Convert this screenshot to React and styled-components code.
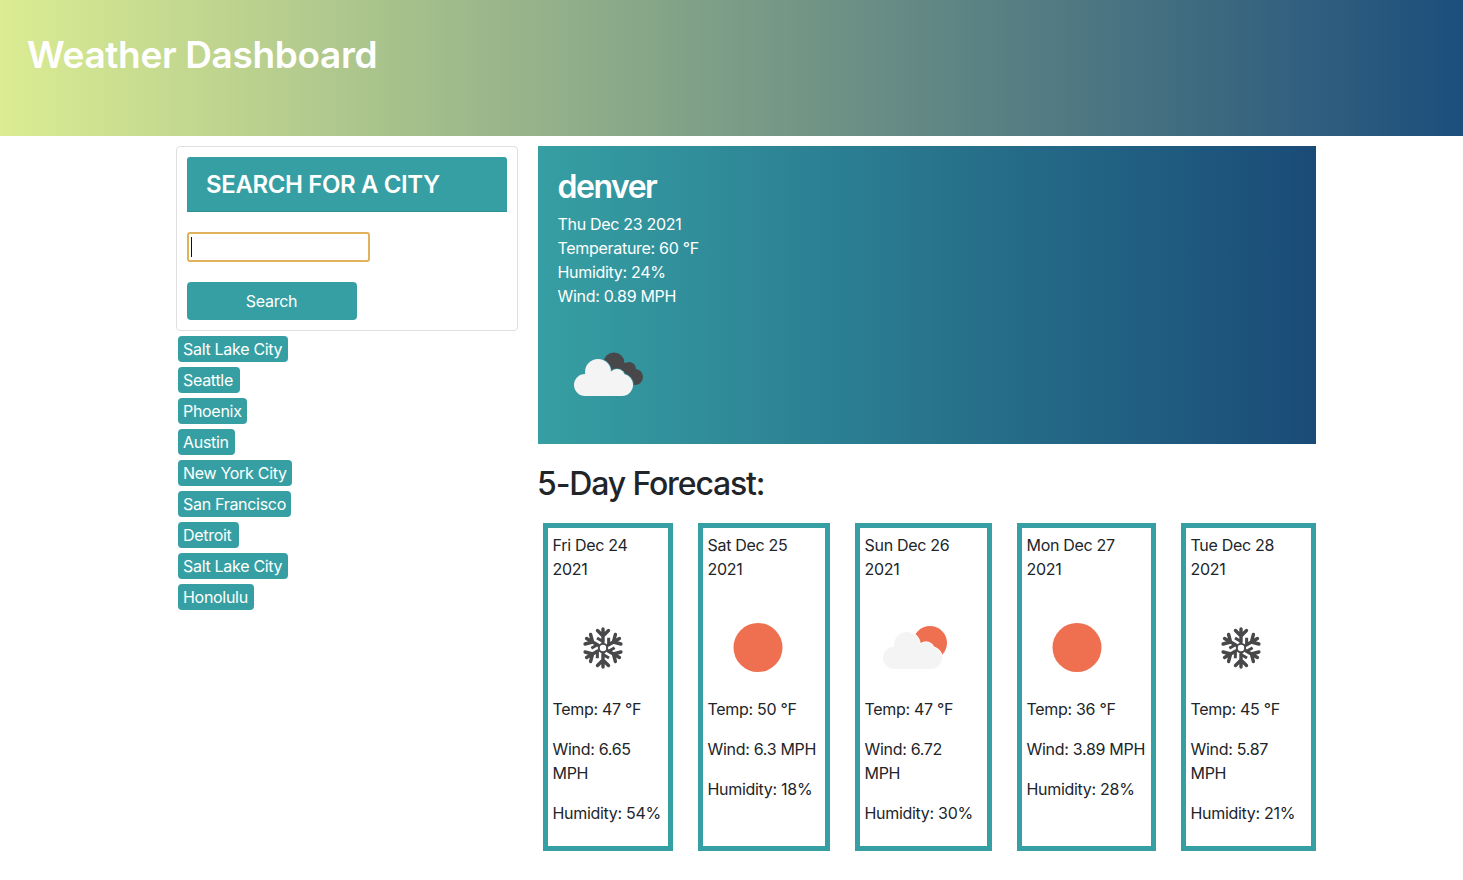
import React from 'react'
import styled, { createGlobalStyle } from 'styled-components'

const GlobalStyle = createGlobalStyle`
  html, body {
    margin: 0;
    background: #fff;
  }
  body {
    font-family: 'Inter', 'Liberation Sans', sans-serif;
    font-size: 16px;
    line-height: 24px;
    letter-spacing: -0.3px;
    color: #212529;
  }
  * {
    box-sizing: border-box;
  }
`

const Header = styled.header`
  height: 136px;
  padding: 29px 27px 0;
  background: linear-gradient(90deg, #dbec92 0%, #1c4e7c 100%);
`

const Title = styled.h1`
  margin: 0;
  color: #fff;
  font-size: 37px;
  font-weight: 600;
  line-height: 52px;
  letter-spacing: -0.35px;
`

const Page = styled.main`
  display: grid;
  grid-template-columns: 342px 778px;
  column-gap: 20px;
  padding: 10px 0 0 176px;
`

const Sidebar = styled.aside`
  display: flex;
  flex-direction: column;
  align-items: flex-start;
`

const SearchCard = styled.form`
  width: 100%;
  height: 185px;
  padding: 10px;
  margin-bottom: 5px;
  border: 1px solid #dfdfdf;
  border-radius: 4px;
`

const SearchTitle = styled.h2`
  margin: 0 0 20px;
  height: 55px;
  padding: 0 19px;
  background: #369fa3;
  border-bottom: 1px solid #2e9094;
  border-radius: 3px 3px 0 0;
  color: #fff;
  font-size: 24px;
  font-weight: 600;
  line-height: 56px;
  letter-spacing: -0.38px;
`

const InputWrap = styled.div`
  position: relative;
  width: 183px;
  height: 30px;
  margin-bottom: 20px;
`

const CityInput = styled.input`
  display: block;
  width: 100%;
  height: 100%;
  padding: 0 3px;
  border: 2px solid #e0b25c;
  border-radius: 3px;
  outline: none;
  background: #fff;
  font: inherit;
  caret-color: transparent;
`

const Caret = styled.span`
  position: absolute;
  top: 5px;
  left: 4px;
  width: 1px;
  height: 20px;
  background: #111;
`

const SearchButton = styled.button`
  display: block;
  width: 170px;
  height: 38px;
  padding: 0 1px 0 0;
  border: 0;
  border-radius: 4px;
  background: #369fa3;
  color: #fff;
  font: inherit;
  letter-spacing: inherit;
`

const CityChip = styled.button`
  display: block;
  height: 26px;
  min-width: ${props => props.$minWidth || 0}px;
  margin: 0 0 5px 2px;
  padding: 0 5px;
  border: 0;
  border-radius: 4px;
  background: #369fa3;
  color: #fff;
  font: inherit;
  letter-spacing: inherit;
  line-height: 26px;
  text-align: left;
`

const Content = styled.section`
  min-width: 0;
`

const Current = styled.div`
  height: 298px;
  padding: 21px 19.5px 0;
  background: linear-gradient(90deg, #369fa3 0%, #1a4b77 100%);
  color: #fff;
`

const CityName = styled.h2`
  margin: 0 0 5px;
  font-size: 32px;
  font-weight: 600;
  line-height: 40px;
  letter-spacing: -1.5px;
`

const CurrentLine = styled.div`
  line-height: 24px;
`

const CurrentIcon = styled.div`
  width: 100px;
  height: 100px;
  margin-top: 17px;
  margin-left: 0.5px;
`

const ForecastTitle = styled.h3`
  margin: 20px 0 19px;
  font-size: 32px;
  font-weight: 500;
  line-height: 40px;
  letter-spacing: -1.15px;
  text-indent: -1px;
`

const ForecastRow = styled.div`
  display: flex;
  justify-content: space-between;
  padding-left: 5px;
`

const DayCard = styled.article`
  width: ${props => props.$width}px;
  height: 328px;
  padding: 5px ${props => props.$padRight || 5}px 5px 4.5px;
  border: 5px solid #369fa3;
`

const DayText = styled.p`
  margin: 0 0 16px;
`

const DayIcon = styled.div`
  width: 100px;
  height: 100px;
  margin-left: 0.5px;
`

// openweather style cloud, the thing behind it is cut back so a thin gap shows
function Cloud({ back, id }) {
  const shift = back === 'sun' ? 'translate(2 1)' : undefined
  const lobes = (
    <>
      <circle cx="27" cy="60" r="11" />
      <circle cx="40" cy="47" r="13" />
      <circle cx="59" cy="52" r="8" />
      <circle cx="64" cy="60" r="11" />
      <rect x="27" y="50" width="37" height="21" />
    </>
  )
  return (
    <svg width="100" height="100" viewBox="0 0 100 100">
      <mask id={id} maskUnits="userSpaceOnUse" x="0" y="0" width="100" height="100">
        <rect width="100" height="100" fill="#fff" />
        <g transform={shift} fill="#000" stroke="#000" strokeWidth="1.6">{lobes}</g>
      </mask>
      <g mask={`url(#${id})`}>
        {back === 'dark' && (
          <g fill="#48484a">
            <circle cx="56" cy="38" r="10.5" />
            <circle cx="71" cy="44" r="7" />
            <circle cx="77" cy="52" r="8" />
            <rect x="56" y="38" width="18" height="22" />
          </g>
        )}
        {back === 'sun' && <circle cx="65" cy="46" r="17" fill="#ee7050" />}
      </g>
      <g transform={shift} fill="#f4f4f4">{lobes}</g>
    </svg>
  )
}

function Sun() {
  return (
    <svg width="100" height="100" viewBox="0 0 100 100">
      <circle cx="50" cy="50.5" r="24.5" fill="#ee7050" />
    </svg>
  )
}

function Snow() {
  return (
    <svg width="100" height="100" viewBox="0 0 100 100">
      {[0, 60, 120, 180, 240, 300].map(a => (
        <g key={a} transform={`rotate(${a} 50 51)`}>
          <path
            d="M50 45 V32 M44.5 33.5 L50 39 L55.5 33.5"
            fill="none"
            stroke="#48484a"
            strokeWidth="3.4"
            strokeLinecap="round"
            strokeLinejoin="round"
          />
          <path d="M50 44.5 L44 41" fill="none" stroke="#48484a" strokeWidth="3" />
        </g>
      ))}
      <circle cx="50" cy="51" r="4.2" fill="#fff" stroke="#48484a" strokeWidth="2" />
    </svg>
  )
}

const cities = [
  { name: 'Salt Lake City', minWidth: 110 },
  { name: 'Seattle', minWidth: 62 },
  { name: 'Phoenix' },
  { name: 'Austin', minWidth: 57 },
  { name: 'New York City' },
  { name: 'San Francisco' },
  { name: 'Detroit', minWidth: 61 },
  { name: 'Salt Lake City', minWidth: 110 },
  { name: 'Honolulu', minWidth: 76 },
]

const days = [
  { date: 'Fri Dec 24 2021', temp: 47, wind: '6.65', hum: 54, icon: 'snow', width: 130 },
  { date: 'Sat Dec 25 2021', temp: 50, wind: '6.3', hum: 18, icon: 'sun', width: 132 },
  { date: 'Sun Dec 26 2021', temp: 47, wind: '6.72', hum: 30, icon: 'cloud', width: 137, padRight: 9 },
  { date: 'Mon Dec 27 2021', temp: 36, wind: '3.89', hum: 28, icon: 'sun', width: 139 },
  { date: 'Tue Dec 28 2021', temp: 45, wind: '5.87', hum: 21, icon: 'snow', width: 135 },
]

function DayGlyph({ icon, id }) {
  if (icon === 'snow') return <Snow />
  if (icon === 'sun') return <Sun />
  return <Cloud back="sun" id={id} />
}

export default function App() {
  return (
    <>
      <GlobalStyle />
      <Header>
        <Title>Weather Dashboard</Title>
      </Header>
      <Page>
        <Sidebar>
          <SearchCard onSubmit={e => e.preventDefault()}>
            <SearchTitle>SEARCH FOR A CITY</SearchTitle>
            <InputWrap>
              <CityInput type="text" />
              <Caret />
            </InputWrap>
            <SearchButton>Search</SearchButton>
          </SearchCard>
          {cities.map((city, i) => (
            <CityChip key={i} $minWidth={city.minWidth}>{city.name}</CityChip>
          ))}
        </Sidebar>
        <Content>
          <Current>
            <CityName>denver</CityName>
            <CurrentLine>Thu Dec 23 2021</CurrentLine>
            <CurrentLine>Temperature: 60 °F</CurrentLine>
            <CurrentLine>Humidity: 24%</CurrentLine>
            <CurrentLine>Wind: 0.89 MPH</CurrentLine>
            <CurrentIcon><Cloud back="dark" id="current-cut" /></CurrentIcon>
          </Current>
          <ForecastTitle>5-Day Forecast:</ForecastTitle>
          <ForecastRow>
            {days.map(day => (
              <DayCard key={day.date} $width={day.width} $padRight={day.padRight}>
                <DayText>{day.date}</DayText>
                <DayIcon><DayGlyph icon={day.icon} id={`cut-${day.temp}`} /></DayIcon>
                <DayText>Temp: {day.temp} °F</DayText>
                <DayText>Wind: {day.wind} MPH</DayText>
                <DayText>Humidity: {day.hum}%</DayText>
              </DayCard>
            ))}
          </ForecastRow>
        </Content>
      </Page>
    </>
  )
}
